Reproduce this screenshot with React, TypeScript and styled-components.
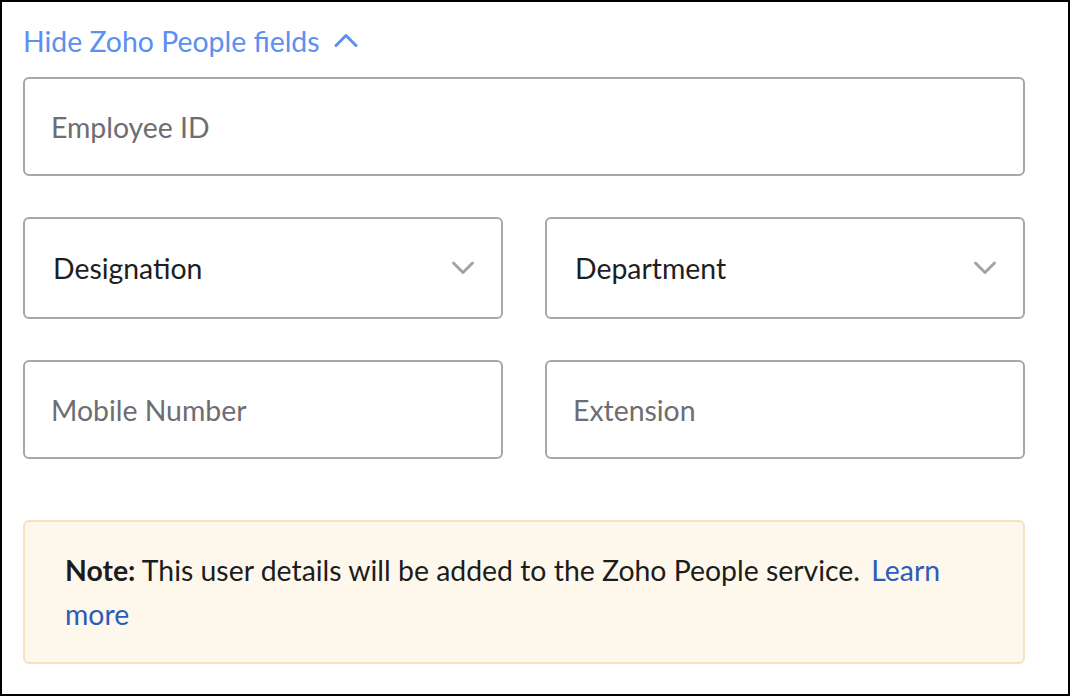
import React from "react"
import styled, { createGlobalStyle } from "styled-components"

const GlobalStyle = createGlobalStyle`
  html, body { margin: 0; padding: 0; background: #fff; }
  body { font-family: Lato, "Open Sans", sans-serif; }
`

const ChevronUp = () => (
  <svg width="24" height="16" viewBox="0 0 24 16">
    <polyline points="2,13.5 12,3.5 22,13.5" fill="none" stroke="#5b8ff0" strokeWidth="3" strokeLinecap="round" strokeLinejoin="round" />
  </svg>
)

const ChevronDown = () => (
  <svg width="24" height="16" viewBox="0 0 24 16">
    <polyline points="2.5,3 12,12.5 21.5,3" fill="none" stroke="#a3a3a8" strokeWidth="3" strokeLinecap="round" strokeLinejoin="round" />
  </svg>
)

const App = () => {
  return (
    <>
      <GlobalStyle />
      <Frame>
        <Toggle>
          <span>Hide Zoho People fields</span>
          <ChevronUp />
        </Toggle>
        <Field h={99}>
          <Placeholder>Employee ID</Placeholder>
        </Field>
        <Row>
          <Field h={102}>
            <Value>Designation</Value>
            <ChevronDown />
          </Field>
          <Field h={102}>
            <Value>Department</Value>
            <ChevronDown />
          </Field>
        </Row>
        <Row>
          <Field h={99}>
            <Placeholder>Mobile Number</Placeholder>
          </Field>
          <Field h={99}>
            <Placeholder>Extension</Placeholder>
          </Field>
        </Row>
        <Note>
          <b>Note:</b> This user details will be added to the Zoho People service. <Link href="#">Learn more</Link>
        </Note>
      </Frame>
    </>
  )
}

export default App

const Frame = styled.div`
  box-sizing: border-box;
  width: 1070px;
  height: 696px;
  border: 2px solid #000;
  padding: 23px 43px 0 21px;
  display: flex;
  flex-direction: column;
`

const Toggle = styled.div`
  display: flex;
  align-items: center;
  gap: 14px;
  height: 32px;
  font-size: 28.4px;
  line-height: 32px;
  color: #5b8ff0;
  margin-bottom: 20px;
  svg { margin-top: -3px; }
`

const Row = styled.div`
  display: grid;
  grid-template-columns: 1fr 1fr;
  gap: 42px;
  margin-top: 41px;
`

const Field = styled.div<{ h: number }>`
  box-sizing: border-box;
  height: ${p => p.h}px;
  border: 2px solid #a7a7ab;
  border-radius: 6px;
  display: flex;
  align-items: center;
  justify-content: space-between;
  padding: 0 26px 0 26px;
`

const Placeholder = styled.span`
  font-size: 28.4px;
  color: #6d6d72;
`

const Value = styled.span`
  font-size: 28.4px;
  color: #1e1e1e;
  margin-left: 2px;
`

const Note = styled.div`
  box-sizing: border-box;
  margin-top: 61px;
  background: #fef8ec;
  border: 2px solid #f6e3c2;
  border-radius: 6px;
  padding: 26px 40px;
  font-size: 28.4px;
  line-height: 44px;
  color: #1c1c1c;
  b { font-weight: 700; }
`

const Link = styled.a`
  color: #2c5cb9;
  text-decoration: none;
  margin-left: 4px;
`
